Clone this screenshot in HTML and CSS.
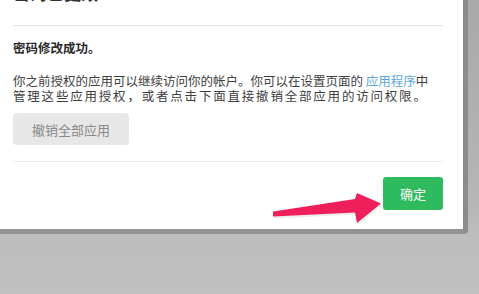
FILE: index.html
```html
<!DOCTYPE html>
<html lang="zh-CN">
<head>
<meta charset="utf-8">
<title>密码修改成功</title>
<link rel="stylesheet" href="styles.css">
</head>
<body>
<div class="modal">
  <div class="modal-header">
    <h2 class="modal-title">密码已更改</h2>
  </div>
  <div class="modal-body">
    <p class="success">密码修改成功。</p>
    <p class="desc"><span class="line">你之前授权的应用可以继续访问你的帐户。你可以在设置页面的 <a class="link" href="#">应用程序</a>中</span><span class="line line2">管理这些应用授权，或者点击下面直接撤销全部应用的访问权限。</span></p>
    <button class="btn-revoke" type="button">撤销全部应用</button>
  </div>
  <div class="modal-footer">
    <button class="btn-ok" type="button">确定</button>
  </div>
</div>
<svg class="arrow" width="479" height="294" viewBox="0 0 479 294" xmlns="http://www.w3.org/2000/svg">
  <polygon points="273,211.5 355,199 357,193 381,203.5 357,223 355,212.5 273,216.5" fill="#c8c8c8" opacity="0.35" transform="translate(1,2)"/>
  <polygon points="273,211.5 355,199 357,193 381,203.5 357,223 355,212.5 273,216.5" fill="#ee1f5a"/>
</svg>
</body>
</html>
```
FILE: styles.css
```css
html, body {
  margin: 0;
  padding: 0;
}
body {
  width: 479px;
  height: 294px;
  overflow: hidden;
  background: linear-gradient(180deg, #a9a9a9 0%, #b6b6b6 70%, #bdbdbd 80%, #c0c0c0 100%);
  font-family: "Noto Sans CJK SC", "Microsoft YaHei", sans-serif;
  position: relative;
}
.modal {
  display: flow-root;
  width: 430px;
  background: #fff;
  border-right: 5px solid #8c8c8c;
  border-bottom: 5px solid #939393;
  border-bottom-right-radius: 4px;
  padding: 0 20px 0 13px;
}
.modal-header {
  display: flex;
  align-items: flex-end;
  height: 25px;
  border-bottom: 1px solid #e3e3e3;
}
.modal-title {
  margin: 0 0 24px 0;
  font-size: 17px;
  line-height: 17px;
  font-weight: bold;
  color: #333;
}
.modal-body {
  padding: 15px 0 16px 0;
  border-bottom: 1px solid #ececec;
}
.success {
  margin: 0;
  font-size: 12.5px;
  line-height: 14px;
  font-weight: bold;
  color: #2a2a2a;
}
.desc {
  margin: 18px 0 0 0;
  font-size: 12.5px;
  line-height: 15px;
  color: #3e3e3e;
  white-space: nowrap;
}
.line {
  display: block;
  height: 15px;
}
.line2 {
  letter-spacing: 1.8px;
}
.link {
  color: #5aa6dc;
  text-decoration: none;
}
.btn-revoke {
  display: block;
  margin-top: 10px;
  width: 116px;
  height: 32px;
  border: none;
  border-radius: 4px;
  background: #e7e7e7;
  color: #8a8a8a;
  font-family: inherit;
  font-size: 13px;
  padding: 0;
}
.modal-footer {
  display: flex;
  justify-content: flex-end;
  padding: 15px 0 19px 0;
}
.btn-ok {
  width: 60px;
  height: 33px;
  border: none;
  border-radius: 3px;
  background: #2ebb5d;
  color: #fff;
  font-family: inherit;
  font-size: 13px;
  padding: 0;
}
.arrow {
  position: absolute;
  left: 0;
  top: 0;
  pointer-events: none;
}
```
